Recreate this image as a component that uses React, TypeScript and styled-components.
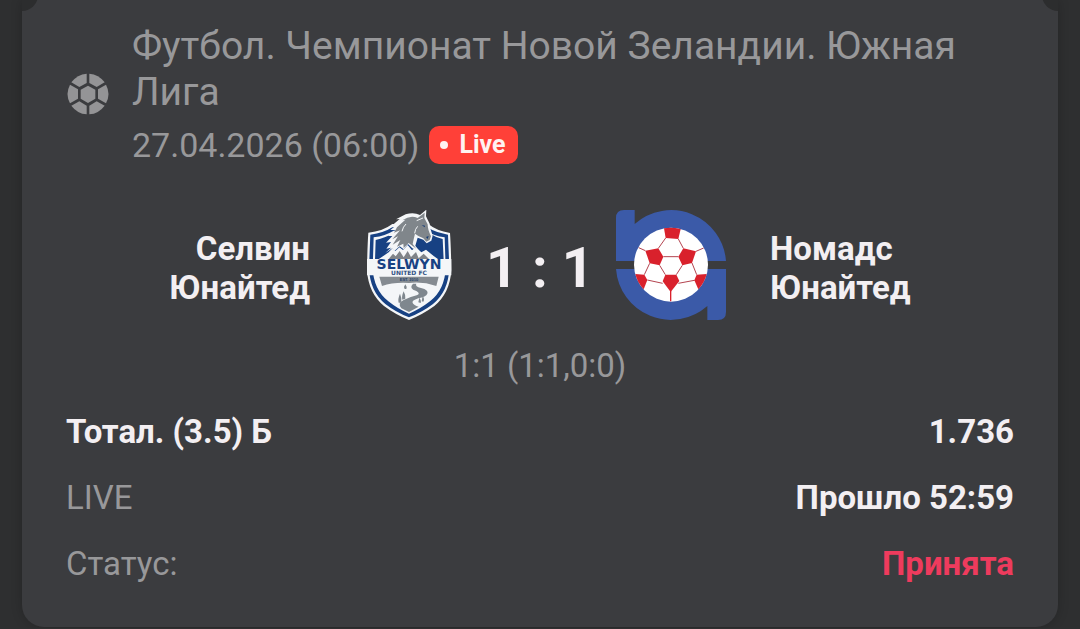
import React from "react";
import styled, { createGlobalStyle } from "styled-components";

const GlobalStyle = createGlobalStyle`
  * { box-sizing: border-box; }
  body {
    margin: 0;
    background: #2e2f30;
    font-family: Roboto, "Liberation Sans", sans-serif;
    font-size: 33px;
    line-height: 38px;
    color: #f3eff2;
  }
`;

const Page = styled.main`
  padding: 0 22px 1px;
`;

const Card = styled.article`
  position: relative;
  overflow: hidden;
  padding: 23px 44px 44px;
  background: #3b3c3f;
  border-radius: 0 0 22px 22px;
  box-shadow: 0 0 12px rgba(0, 0, 0, 0.2);
`;

const Notch = styled.span<{ $side: "left" | "right" }>`
  position: absolute;
  top: -21px;
  ${(p) => p.$side}: -16px;
  width: 32px;
  height: 32px;
  border-radius: 50%;
  background: #2c2d2e;
`;

const Header = styled.header`
  display: flex;
  align-items: center;
  gap: 23px;
`;

const BallIcon = styled.svg`
  flex: none;
  width: 42px;
  height: 42px;
  margin-left: 1px;
  fill: #949496;
`;

const League = styled.h1`
  margin: 0;
  font-size: 39px;
  line-height: 46px;
  font-weight: 400;
  color: #98989a;
`;

const DateRow = styled.div`
  display: flex;
  align-items: center;
  gap: 10px;
  padding-top: 10px;
  font-size: 34px;
  line-height: 40px;
  color: #98989a;
`;

const LiveBadge = styled.span`
  display: flex;
  align-items: center;
  gap: 11px;
  height: 38px;
  padding: 0 12px 0 11px;
  border-radius: 10px;
  background: #ff4038;
  color: #fff3f1;
  font-size: 25px;
  line-height: 38px;
  font-weight: 700;

  &::before {
    content: "";
    width: 8px;
    height: 8px;
    border-radius: 50%;
    background: #fff3f1;
  }
`;

const Match = styled.section`
  display: grid;
  grid-template-columns: 1fr 110px 152px 110px 1fr;
  align-items: center;
  margin-top: 45px;
`;

const Team = styled.h2<{ $home?: boolean }>`
  margin: 0;
  padding-top: 5px;
  ${(p) => (p.$home ? "padding-right: 44px; text-align: right;" : "padding-left: 44px;")}
  font-size: 33px;
  line-height: 39px;
  font-weight: 700;
`;

const Logo = styled.svg`
  width: 110px;
  height: 110px;
`;

const Score = styled.strong`
  padding-top: 6px;
  font-size: 56px;
  line-height: 64px;
  font-weight: 700;
  text-align: center;
  white-space: nowrap;
`;

const Periods = styled.p`
  margin: 27px 0 28px;
  text-align: center;
  color: #98989a;
`;

const Details = styled.dl`
  display: grid;
  gap: 28px;
  margin: 0;
`;

const Row = styled.div`
  display: flex;
  justify-content: space-between;
`;

const Label = styled.dt<{ $strong?: boolean }>`
  color: ${(p) => (p.$strong ? "#f3eff2" : "#98989a")};
  font-weight: ${(p) => (p.$strong ? 700 : 400)};
`;

const Value = styled.dd<{ $accent?: boolean }>`
  margin: 0;
  font-weight: 700;
  color: ${(p) => (p.$accent ? "#ee3b5d" : "#f3eff2")};
`;

function Football() {
  return (
    <BallIcon viewBox="36 27 126 126" aria-hidden="true">
      <path d="M99 65 L121 77 V104 L99 117 L77 104 V77Z" />
      <path d="M95 29 V57 L73 69 L49 55 Q67 31 95 29Z" />
      <path d="M103 29 V57 L125 69 L149 55 Q131 31 103 29Z" />
      <path d="M95 151 V125 L73 112 L49 125 Q67 149 95 151Z" />
      <path d="M103 151 V125 L125 112 L149 125 Q131 149 103 151Z" />
      <path d="M45 62 L69 76 V104 L45 118 Q30 90 45 62Z" />
      <path d="M153 62 L129 76 V104 L153 118 Q168 90 153 62Z" />
    </BallIcon>
  );
}

function SelwynLogo() {
  return (
    <Logo viewBox="-3 30 330 330" role="img" aria-label="Selwyn United FC">
      <path fill="#f4f6f8" d="M40 98 Q83 94 112 72 H220 Q244 92 285 99 Q288 140 289 210 Q285 279 238 318 Q204 343 162 360 Q120 343 87 318 Q40 279 36 210 Q37 140 40 98Z" />
      <path fill="#174183" d="M46 104 Q86 99 112 82 H217 Q242 98 279 104 L283 205 Q280 275 234 312 Q201 337 162 352 Q123 337 91 312 Q45 275 42 205Z" />
      <path fill="#f4f6f8" d="M56 112 Q91 107 116 92 H212 Q237 108 269 112 L272 205 Q269 270 225 304 Q194 328 162 341 Q130 328 100 304 Q56 270 53 205Z" />
      <path fill="#174183" d="M62 120 Q92 113 110 103 L220 98 Q242 112 263 117 L266 181 H60Z" />
      <path fill="#f4f6f8" d="M66 181 L101 157 L113 144 L121 153 L133 142 L144 150 L158 135 L171 151 L182 141 L199 157 L213 149 L237 169 L254 181Z" />
      <path fill="#7f8388" d="M101 177 L114 161 L122 169 L134 153 L146 172 L158 153 L168 171 L183 156 L191 175 L206 161 L222 177Z" />
      <path fill="#f4f6f8" d="M91 159 L108 143 L94 146 L108 126 L93 128 L112 108 L99 108 L122 90 L106 90 L126 74 L112 76 L134 57 L123 58 L152 43 Q176 35 195 45 L214 29 L213 49 L224 71 Q225 86 233 107 L229 122 L215 130 L205 119 L188 113 L181 137 L193 154 L172 145 L159 132 L146 148 L134 139 L119 152 L112 145Z" />
      <path fill="#80868b" d="M126 82 L151 59 L142 61 Q166 44 188 54 L209 38 L208 54 L218 73 Q218 89 228 109 L224 120 L214 125 L205 115 L190 108 L180 101 Q175 121 173 132 L184 146 L161 129 L146 144 L145 131 L126 140 L136 120 L113 134 L129 109 L112 118 L135 91 L117 98Z" />
      <path fill="none" stroke="#f4f6f8" strokeWidth="3" d="M185 62 L204 54 M179 100 Q180 87 188 79 M153 72 Q144 80 141 94" />
      <path fill="#173d75" d="M200 75 L210 77 L209 82Z M213 111 L221 108 L218 117Z" />
      <path fill="#f4f6f8" d="M36 177 H289 V226 H36Z" />
      <text x="162" y="208" textAnchor="middle" fill="#174183" fontFamily="DejaVu Sans, sans-serif" fontSize="42" fontWeight="700">SELWYN</text>
      <text x="162" y="224" textAnchor="middle" fill="#315183" fontFamily="DejaVu Sans, sans-serif" fontSize="18" fontWeight="700">UNITED FC</text>
      <path fill="#858b91" d="M73 230 H251 L244 258 Q203 244 162 249 Q116 246 81 258Z" />
      <text x="162" y="243" textAnchor="middle" fill="#253f69" fontFamily="Liberation Sans, sans-serif" fontSize="12" fontWeight="700">EST. 2010</text>
      <path fill="#7f878e" d="M174 251 H184 Q179 259 198 264 Q222 270 217 281 Q213 290 190 295 Q169 302 173 309 Q176 316 191 320 L162 336 L139 325 Q126 309 146 300 Q161 292 185 286 Q198 281 184 273 Q160 265 174 251Z" />
      <path fill="#7f878e" d="M135 281 Q128 296 131 308 H139 Q141 294 135 281Z M146 274 Q139 290 142 299 L151 296 Q152 285 146 274Z M151 253 Q145 260 149 267 H154 Q157 261 151 253Z M193 293 Q200 303 197 309 L190 307Z M203 287 Q210 298 205 305 L200 304Z" />
    </Logo>
  );
}

function NomadsLogo() {
  return (
    <Logo viewBox="33 30 330 330" role="img" aria-label="Nomads United">
      <g fill="#3b5aa8">
        <path d="M33 54 Q33 30 57 30 H89 V72 A165 165 0 0 1 363 183 H33Z" />
        <path d="M33 207 H363 V336 Q363 360 339 360 H307 V318 A165 165 0 0 1 33 207Z" />
      </g>
      <circle cx="198" cy="194" r="111" fill="#fff" />
      <g fill="#d9212c">
        <path d="M177 85 Q198 80 227 87 L220 117 L182 114Z" />
        <path d="M121 152 L160 145 L175 170 L164 196 L134 190Z" />
        <path d="M273 154 L235 145 L220 170 L232 196 L261 189Z" />
        <path d="M181 224 L214 224 L223 243 L197 276 L173 244Z" />
        <path d="M91 222 L118 224 L127 240 L116 268 Q97 248 91 222Z" />
        <path d="M305 222 L275 224 L268 241 L280 268 Q299 248 305 222Z" />
      </g>
      <path fill="none" stroke="#b44450" strokeWidth="3" d="M182 114 L160 145 M220 117 L235 145 M175 170 H220 M121 152 L101 143 M273 154 L296 144 M134 190 L118 224 M261 189 L275 224 M164 196 L181 224 M232 196 L214 224 M127 240 L173 250 M268 241 L220 250" />
      <path stroke="#d9212c" strokeWidth="4" d="M197 272 V304" />
    </Logo>
  );
}

export default function App() {
  return (
    <>
      <GlobalStyle />
      <Page>
        <Card>
          <Notch $side="left" />
          <Notch $side="right" />
          <Header>
            <Football />
            <div>
              <League>Футбол. Чемпионат Новой Зеландии. Южная Лига</League>
              <DateRow>
                <time dateTime="2026-04-27T06:00">27.04.2026 (06:00)</time>
                <LiveBadge>Live</LiveBadge>
              </DateRow>
            </div>
          </Header>
          <Match>
            <Team $home>Селвин Юнайтед</Team>
            <SelwynLogo />
            <Score>1 : 1</Score>
            <NomadsLogo />
            <Team>Номадс Юнайтед</Team>
          </Match>
          <Periods>1:1 (1:1,0:0)</Periods>
          <Details>
            <Row>
              <Label $strong>Тотал. (3.5) Б</Label>
              <Value>1.736</Value>
            </Row>
            <Row>
              <Label>LIVE</Label>
              <Value>Прошло 52:59</Value>
            </Row>
            <Row>
              <Label>Статус:</Label>
              <Value $accent>Принята</Value>
            </Row>
          </Details>
        </Card>
      </Page>
    </>
  );
}
